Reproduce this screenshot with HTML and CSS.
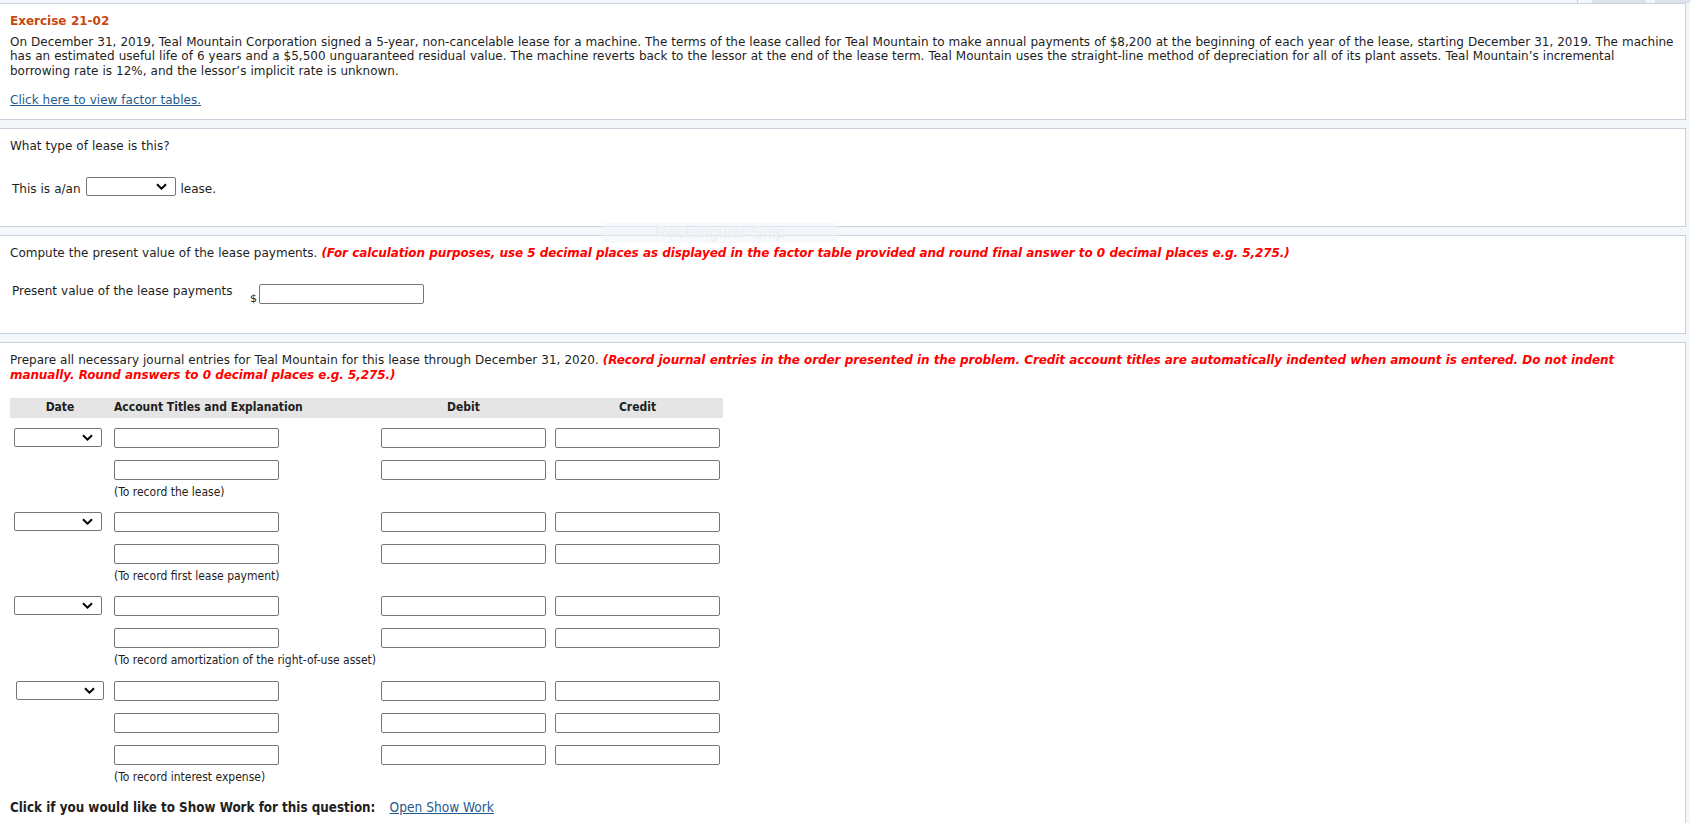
FILE: index.html
```html
<!DOCTYPE html>
<html lang="en">
<head>
	<meta charset="UTF-8">
	<meta name="viewport" content="width=device-width, initial-scale=1.0">
	<title>Exercise 21-02</title>
	<link rel="stylesheet" href="styles.css">
</head>
<body>

	<div class="topbar">
		<span class="tab-edge"></span>
		<span class="tab"></span>
		<span class="tab tab-last"></span>
	</div>

	<section class="panel intro">
		<h1 class="title">Exercise 21-02</h1>
		<p>On December 31, 2019, Teal Mountain Corporation signed a 5-year, non-cancelable lease for a machine. The terms of the lease called for Teal Mountain to make annual payments of $8,200 at the beginning of each year of the lease, starting December 31, 2019. The machine<br>
		has an estimated useful life of 6 years and a $5,500 unguaranteed residual value. The machine reverts back to the lessor at the end of the lease term. Teal Mountain uses the straight-line method of depreciation for all of its plant assets. Teal Mountain’s incremental<br>
		borrowing rate is 12%, and the lessor’s implicit rate is unknown.</p>
		<p class="tables-link"><a href="#">Click here to view factor tables.</a></p>
	</section>

	<section class="panel part">
		<p>What type of lease is this?</p>
		<div class="answer-row">
			<span class="label">This is a/an</span>
			<span class="select-box pick">
				<select><option></option></select>
				<svg class="chevron" width="11" height="7" viewBox="0 0 11 7"><path d="M1 1.2 L5.5 5.6 L10 1.2" fill="none" stroke="#000" stroke-width="2"/></svg>
			</span>
			<span class="label">lease.</span>
		</div>
	</section>

	<div class="snip">Rectangular Snip</div>

	<section class="panel part">
		<p>Compute the present value of the lease payments. <span class="hint">(For calculation purposes, use 5 decimal places as displayed in the factor table provided and round final answer to 0 decimal places e.g. 5,275.)</span></p>
		<div class="amount-row">
			<span class="amount-label">Present value of the lease payments</span>
			<span class="currency">$</span>
			<input class="field" type="text">
		</div>
	</section>

	<section class="panel journal-panel">
		<p>Prepare all necessary journal entries for Teal Mountain for this lease through December 31, 2020. <span class="hint">(Record journal entries in the order presented in the problem. Credit account titles are automatically indented when amount is entered. Do not indent manually. Round answers to 0 decimal places e.g. 5,275.)</span></p>

		<div class="journal">
			<div class="journal-head">
				<span class="col-date">Date</span>
				<span>Account Titles and Explanation</span>
				<span class="col-money debit">Debit</span>
				<span class="col-money">Credit</span>
			</div>

			<div class="entry">
				<div class="line">
					<span class="select-box date-pick">
						<select><option></option></select>
						<svg class="chevron" width="11" height="7" viewBox="0 0 11 7"><path d="M1 1.2 L5.5 5.6 L10 1.2" fill="none" stroke="#000" stroke-width="2"/></svg>
					</span>
					<input class="field" type="text">
					<input class="field" type="text">
					<input class="field" type="text">
				</div>
				<div class="line">
					<span></span>
					<input class="field" type="text">
					<input class="field" type="text">
					<input class="field" type="text">
				</div>
				<div class="memo">(To record the lease)</div>
			</div>

			<div class="entry">
				<div class="line">
					<span class="select-box date-pick">
						<select><option></option></select>
						<svg class="chevron" width="11" height="7" viewBox="0 0 11 7"><path d="M1 1.2 L5.5 5.6 L10 1.2" fill="none" stroke="#000" stroke-width="2"/></svg>
					</span>
					<input class="field" type="text">
					<input class="field" type="text">
					<input class="field" type="text">
				</div>
				<div class="line">
					<span></span>
					<input class="field" type="text">
					<input class="field" type="text">
					<input class="field" type="text">
				</div>
				<div class="memo">(To record first lease payment)</div>
			</div>

			<div class="entry">
				<div class="line">
					<span class="select-box date-pick">
						<select><option></option></select>
						<svg class="chevron" width="11" height="7" viewBox="0 0 11 7"><path d="M1 1.2 L5.5 5.6 L10 1.2" fill="none" stroke="#000" stroke-width="2"/></svg>
					</span>
					<input class="field" type="text">
					<input class="field" type="text">
					<input class="field" type="text">
				</div>
				<div class="line">
					<span></span>
					<input class="field" type="text">
					<input class="field" type="text">
					<input class="field" type="text">
				</div>
				<div class="memo">(To record amortization of the right-of-use asset)</div>
			</div>

			<div class="entry entry-last">
				<div class="line">
					<span class="select-box date-pick shifted">
						<select><option></option></select>
						<svg class="chevron" width="11" height="7" viewBox="0 0 11 7"><path d="M1 1.2 L5.5 5.6 L10 1.2" fill="none" stroke="#000" stroke-width="2"/></svg>
					</span>
					<input class="field" type="text">
					<input class="field" type="text">
					<input class="field" type="text">
				</div>
				<div class="line">
					<span></span>
					<input class="field" type="text">
					<input class="field" type="text">
					<input class="field" type="text">
				</div>
				<div class="line">
					<span></span>
					<input class="field" type="text">
					<input class="field" type="text">
					<input class="field" type="text">
				</div>
				<div class="memo">(To record interest expense)</div>
			</div>
		</div>

		<p class="show-work">Click if you would like to Show Work for this question: <a href="#">Open Show Work</a></p>
	</section>

</body>
</html>
```

FILE: styles.css
```css
body {
	margin: 0;
	background: #f4f7fa;
	font-family: "DejaVu Sans", Verdana, sans-serif;
	font-size: 12px;
	line-height: 14.6px;
	color: #1e1e1e;
	word-spacing: 0.2px;
}

p {
	margin: 0;
}

a {
	color: #1f5a8c;
}

/* strip of cut-off buttons above the first panel */
.topbar {
	height: 3px;
	display: flex;
	justify-content: flex-end;
}

.tab-edge {
	width: 1px;
	background: #c9d2dc;
	margin-right: 14px;
}

.tab {
	width: 54px;
	background: #dce2e9;
	margin-right: 9px;
}

.tab-last {
	width: 35px;
	margin-right: 0;
}

.panel {
	background: #fff;
	border: 1px solid #c9d2dc;
	border-left: 0;
	margin: 0 4px 8px 0;
	padding: 10px 8px 11px 10px;
}

.intro {
	padding-right: 4px;
}

.title {
	margin: 0 0 6px;
	font-size: 12px;
	line-height: 14.6px;
	font-weight: bold;
	color: #c8470f;
}

.tables-link {
	margin-top: 14.6px;
}

.hint {
	color: #f00;
	font-weight: bold;
	font-style: italic;
	letter-spacing: -0.1px;
}

.part {
	padding-bottom: 29px;
}

.answer-row,
.amount-row {
	display: flex;
	align-items: flex-start;
	margin-top: 24px;
	padding-left: 2px;
}

.answer-row .label {
	margin-top: 5px;
}

.select-box {
	position: relative;
	display: inline-block;
	height: 19px;
}

.select-box select {
	appearance: none;
	box-sizing: border-box;
	width: 100%;
	height: 19px;
	border: 1px solid #767676;
	border-radius: 2px;
	background: #fff;
	font: inherit;
	margin: 0;
	display: block;
}

.chevron {
	position: absolute;
	right: 9px;
	top: 6px;
	pointer-events: none;
}

.pick {
	width: 90px;
	margin: 0 5px;
}

.field {
	box-sizing: border-box;
	width: 165px;
	height: 20px;
	border: 1px solid #767676;
	border-radius: 2px;
	padding: 1px 3px;
	background: #fff;
	font: inherit;
	margin: 0;
}

.amount-label {
	width: 238px;
}

.currency {
	align-self: flex-end;
	font-size: 11px;
	margin-bottom: -2px;
	margin-right: 2px;
}

/* journal entry grid */
.journal {
	width: 713px;
	margin-top: 15px;
	font-family: "DejaVu Sans Condensed", "Liberation Sans", sans-serif;
	word-spacing: 0;
}

.journal-head,
.line {
	display: grid;
	grid-template-columns: 104px 267px 174px 168px;
	align-items: center;
}

.journal-head {
	height: 20px;
	background: #e5e5e5;
	font-weight: bold;
	margin-bottom: -2px;
}

.col-date {
	text-align: center;
	padding-right: 4px;
}

.col-money {
	text-align: center;
	padding-right: 3px;
}

.col-money.debit {
	padding-right: 9px;
}

.line {
	height: 20px;
	margin-top: 12px;
}

.entry-last .line:first-child {
	margin-top: 13px;
}

.date-pick {
	width: 88px;
	margin-left: 4px;
}

.date-pick.shifted {
	margin-left: 6px;
}

.memo {
	margin-top: 5px;
	padding-left: 104px;
	line-height: 15px;
}

.show-work {
	margin-top: 14px;
	font-family: "DejaVu Sans Condensed", "Liberation Sans", sans-serif;
	font-size: 13.3px;
	line-height: 16px;
	font-weight: bold;
	word-spacing: 0;
}

.show-work a {
	font-weight: normal;
	font-size: 13.6px;
	margin-left: 10px;
}

/* faint capture-tool label left over the gap between panels */
.snip {
	position: absolute;
	left: 602px;
	top: 223px;
	width: 236px;
	height: 20px;
	background: rgba(240, 245, 250, 0.5);
	color: #e9eef3;
	font-family: "Liberation Sans", sans-serif;
	font-size: 17px;
	line-height: 20px;
	text-align: center;
	word-spacing: 0;
}
```
